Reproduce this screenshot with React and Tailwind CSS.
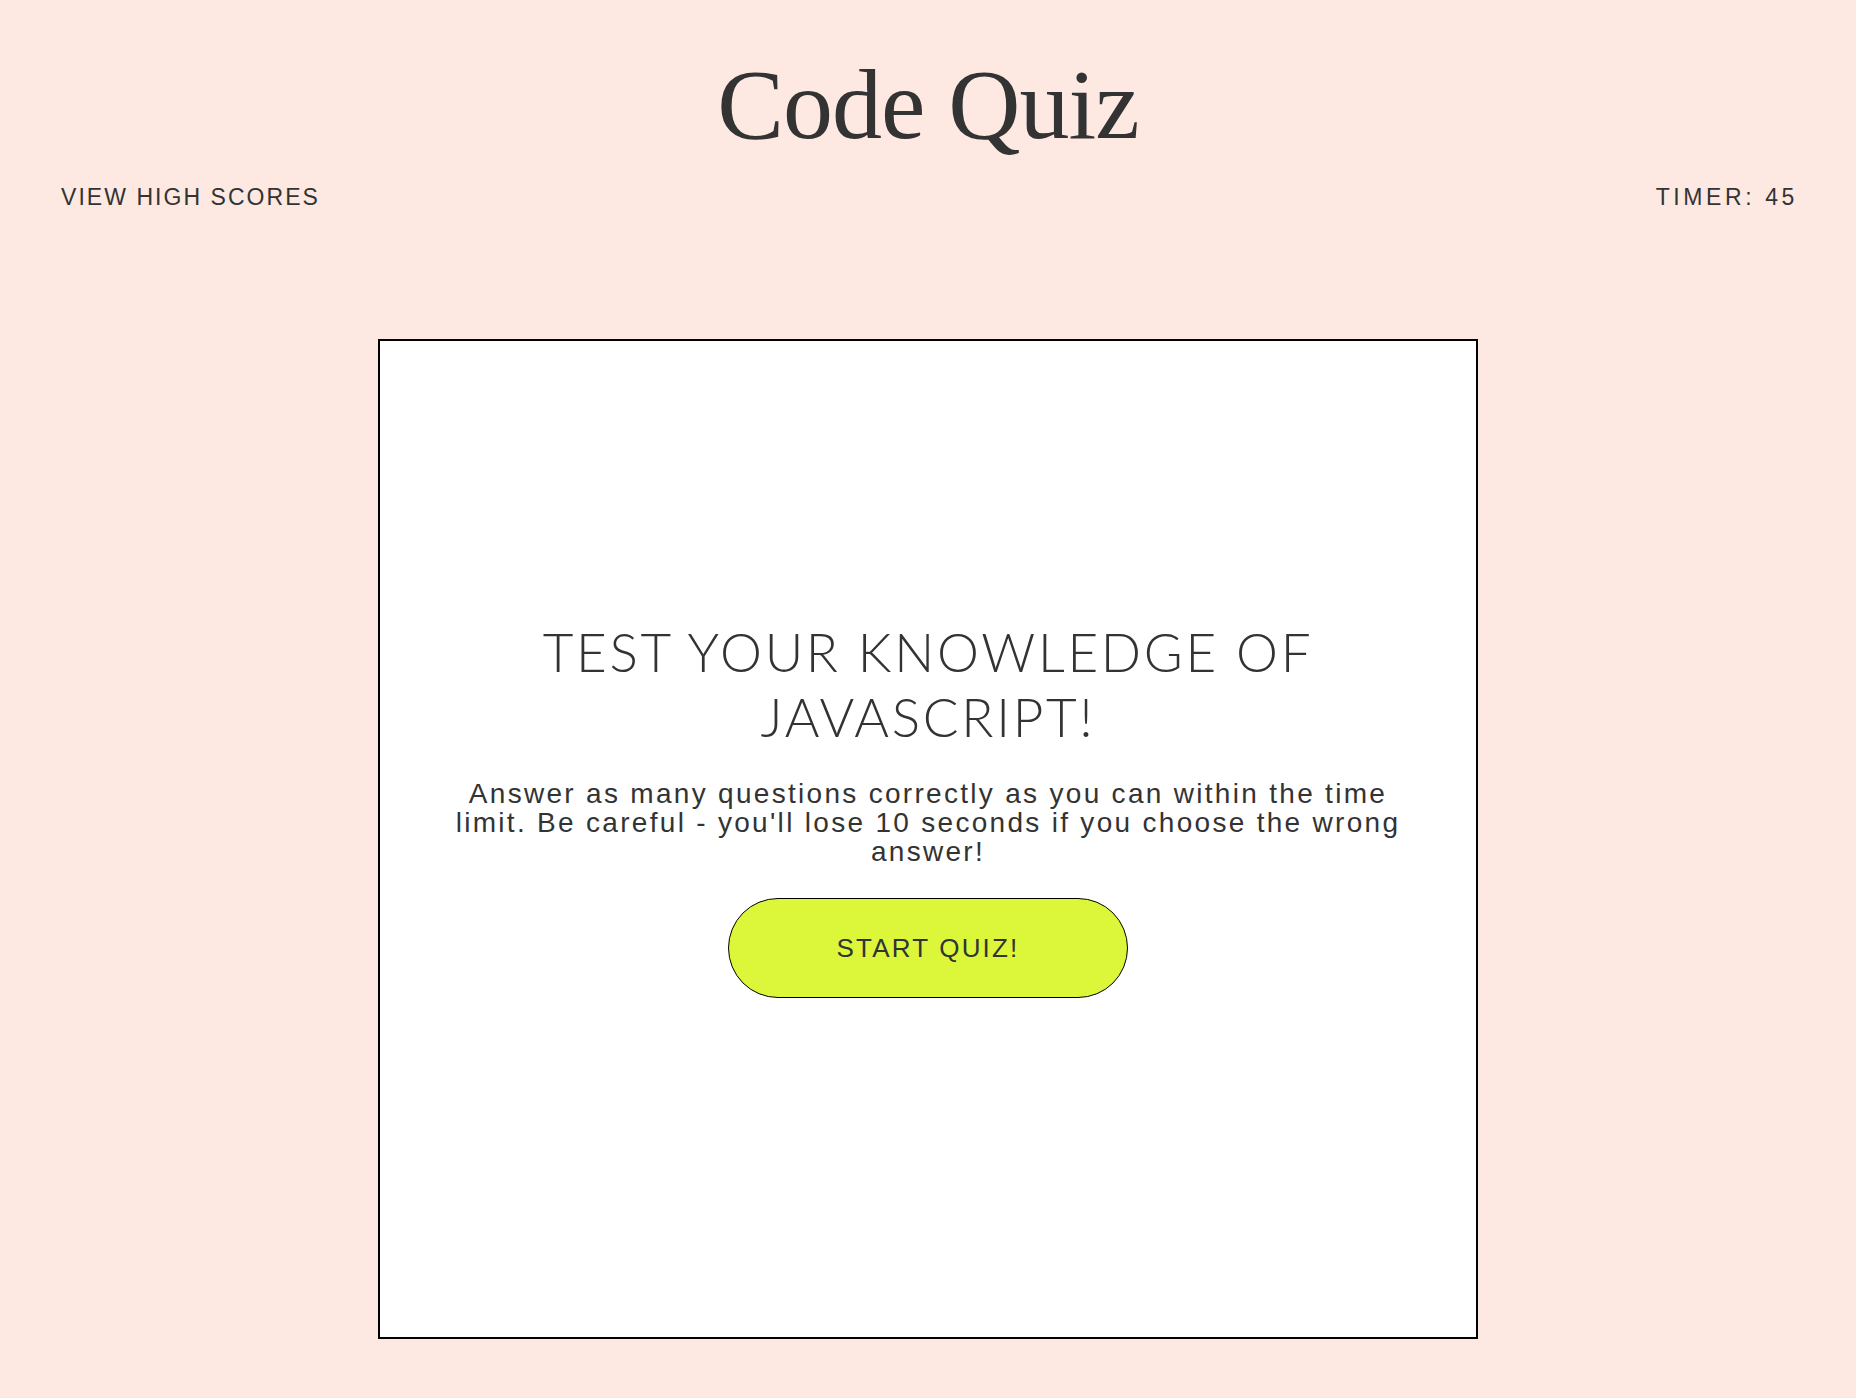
export default function App() {
  return (
    <div className="min-h-[1398px] w-full bg-[#fde9e2] text-[#333333]">
      <header className="flex flex-col">
        <h1 className="pt-[45px] text-center font-['Liberation_Serif','DejaVu_Serif',serif] text-[100px] leading-[120px] font-normal tracking-[-1px]">
          Code Quiz
        </h1>
        <div className="mt-[18px] flex justify-between pl-[61px] pr-[58px] font-['Liberation_Sans',Arial,sans-serif] text-[23px] leading-[28px]">
          <span className="tracking-[2.05px]">VIEW HIGH SCORES</span>
          <span className="tracking-[3.6px]">TIMER: 45</span>
        </div>
      </header>
      <main className="flex justify-center pt-[128px] pb-[59px]">
        <section className="flex h-[1000px] w-[1100px] flex-col items-center justify-center border-2 border-black bg-white pb-[61px]">
          <h2 className="w-[880px] text-center font-['Lato','Noto_Sans',sans-serif] text-[53px] leading-[65px] font-light tracking-[2.7px]">
            TEST YOUR KNOWLEDGE OF JAVASCRIPT!
          </h2>
          <p className="mt-[30px] w-[970px] text-center font-['Liberation_Sans',Arial,sans-serif] text-[28px] leading-[29px] tracking-[2.3px]">
            Answer as many questions correctly as you can within the time limit. Be careful - you'll lose 10 seconds if you choose the wrong answer!
          </p>
          <button className="mt-[32px] flex h-[100px] w-[400px] items-center justify-center rounded-full border border-black bg-[#dcf73a] font-['Liberation_Sans',Arial,sans-serif] text-[26px] tracking-[2.2px] text-[#333333]">
            START QUIZ!
          </button>
        </section>
      </main>
    </div>
  );
}
